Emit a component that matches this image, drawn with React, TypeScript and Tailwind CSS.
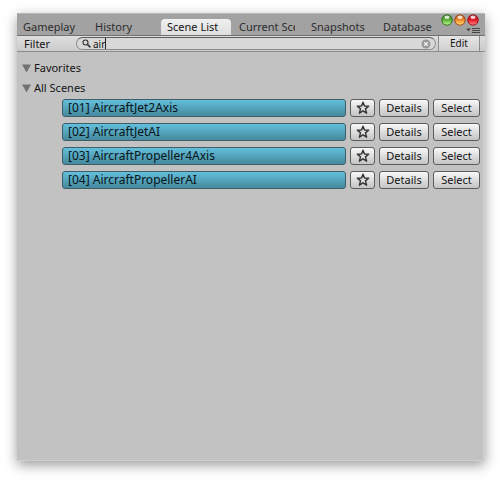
import { useState } from "react";

const tabs = ["Gameplay", "History", "Scene List", "Current Scene", "Snapshots", "Database"];

const scenes = [
  "[01] AircraftJet2Axis",
  "[02] AircraftJetAI",
  "[03] AircraftPropeller4Axis",
  "[04] AircraftPropellerAI",
];

const buttonStyle =
  "h-[18px] shrink-0 rounded-[3px] border border-[#5c5c5c] bg-linear-to-b from-[#f8f8f8] to-[#c4c4c4] text-center leading-4 text-[#141414]";

function Star() {
  return (
    <svg width="14" height="14" viewBox="0 0 14 14" fill="none" stroke="#333" strokeWidth="1.4" strokeLinejoin="round" aria-hidden="true">
      <path d="M7 1.2 8.5 5.1l4.2.2-3.2 2.6 1.1 4.3L7 9.9l-3.6 2.3 1.1-4.3L1.3 5.3l4.2-.2z" />
    </svg>
  );
}

function Light({ id, edge, mid, low }: { id: string; edge: string; mid: string; low: string }) {
  return (
    <svg width="12" height="12" viewBox="0 0 12 12" aria-hidden="true">
      <defs>
        <linearGradient id={id} x1="0" y1="0" x2="0" y2="1">
          <stop offset="0" stopColor={edge} />
          <stop offset="0.5" stopColor={mid} />
          <stop offset="1" stopColor={low} />
        </linearGradient>
      </defs>
      <circle cx="6" cy="6" r="5.2" fill={`url(#${id})`} stroke={edge} />
      <ellipse cx="6" cy="3.2" rx="2.6" ry="1.7" fill="#fff" fillOpacity="0.8" />
    </svg>
  );
}

function Foldout({ label, open, onToggle }: { label: string; open: boolean; onToggle: () => void }) {
  return (
    <button type="button" aria-expanded={open} onClick={onToggle} className="flex h-5 items-center gap-[3px] pl-[5px] text-left">
      <svg width="9" height="9" viewBox="0 0 9 9" aria-hidden="true" className={open ? "" : "-rotate-90"}>
        <path d="M0 .5h9L4.5 8.5z" fill="#727272" />
      </svg>
      {label}
    </button>
  );
}

export default function App() {
  const [active, setActive] = useState("Scene List");
  const [filter, setFilter] = useState("air");
  const [favorites, setFavorites] = useState(true);
  const [all, setAll] = useState(true);

  return (
    <div className="flex min-h-screen flex-col bg-white pt-[13px] pr-4 pb-[21px] pl-[17px] font-['Noto_Sans','Lucida_Grande',sans-serif] text-[11px] leading-4 text-[#141414]">
      <main className="flex flex-1 flex-col bg-[#c2c2c2] shadow-[0_4px_12px_rgba(0,0,0,0.4)]">
        <header className="flex h-[22px] justify-between border-t border-[#b8b8b8] bg-[#a2a2a2]">
          <div role="tablist" className="flex min-w-0 items-end gap-0.5">
            {tabs.map((tab) => (
              <button
                key={tab}
                type="button"
                role="tab"
                aria-selected={tab === active}
                onClick={() => setActive(tab)}
                className={
                  tab === active
                    ? "h-4 w-[70px] shrink-0 overflow-hidden rounded-t-[4px] bg-linear-to-b from-[#f0f0f0] to-[#dedede] pr-2 pl-1.5 text-left last:shrink"
                    : "h-4 w-[70px] shrink-0 pr-2 pl-1.5 text-left text-[#2c2c2c] last:shrink"
                }
              >
                <span className="block overflow-hidden whitespace-nowrap">{tab}</span>
              </button>
            ))}
          </div>
          <div className="flex shrink-0 flex-col items-end pr-[5px]">
            <div className="mr-px flex gap-px">
              <button type="button" aria-label="Minimize"><Light id="green" edge="#34701f" mid="#5cb53a" low="#c6ff9a" /></button>
              <button type="button" aria-label="Zoom"><Light id="amber" edge="#a04a18" mid="#ee8a28" low="#ffe07a" /></button>
              <button type="button" aria-label="Close"><Light id="red" edge="#98131b" mid="#e8192b" low="#ff8a8a" /></button>
            </div>
            <button type="button" aria-label="Tab options" className="pt-px">
              <svg width="14" height="7" viewBox="0 0 14 7" aria-hidden="true">
                <path d="M0 1.5h5L2.5 4.2z" fill="#444" />
                <path d="M6 1.5h8M6 3.5h8M6 5.5h8" stroke="#444" strokeWidth="1" />
              </svg>
            </button>
          </div>
        </header>

        <div className="flex h-[17px] items-center border-t border-b border-t-[#707070] border-b-[#8c8c8c] bg-linear-to-b from-[#dedede] to-[#cbcbcb]">
          <label htmlFor="filter" className="w-[59px] shrink-0 pl-[7px]">Filter</label>
          <label className="flex h-[13px] min-w-0 flex-1 items-center rounded-full border border-[#8a8a8a] border-t-[#5c5c5c] bg-[#d8d8d8] pr-1 pl-[5px]">
            <svg width="9" height="9" viewBox="0 0 9 9" fill="none" stroke="#333" aria-hidden="true" className="mr-0.5 shrink-0">
              <circle cx="3.5" cy="3.5" r="2.5" strokeWidth="1.1" />
              <path d="m5.4 5.4 3 3" strokeWidth="1.5" />
            </svg>
            <input
              id="filter"
              type="text"
              value={filter}
              onChange={(e) => setFilter(e.target.value)}
              className="h-3 min-w-0 bg-transparent p-0 text-[10px] leading-3 caret-transparent outline-none [field-sizing:content]"
            />
            <span className="h-[11px] w-px shrink-0 bg-[#222]" />
            <button type="button" aria-label="Clear filter" onClick={() => setFilter("")} className="ml-auto">
              <svg width="10" height="10" viewBox="0 0 10 10" aria-hidden="true">
                <circle cx="5" cy="5" r="4.5" fill="#999" />
                <path d="m3.2 3.2 3.6 3.6m0-3.6L3.2 6.8" stroke="#eee" strokeWidth="1.3" />
              </svg>
            </button>
          </label>
          <button type="button" className="mr-[5px] ml-0.5 h-full w-[42px] shrink-0 border-r border-l border-[#8c8c8c] bg-linear-to-b from-[#e4e4e4] to-[#d0d0d0] text-[10px] leading-[15px]">
            Edit
          </button>
        </div>

        <section className="flex flex-1 flex-col border-r-2 border-b border-[#cfcfcf] pt-1.5">
          <Foldout label="Favorites" open={favorites} onToggle={() => setFavorites(!favorites)} />
          <Foldout label="All Scenes" open={all} onToggle={() => setAll(!all)} />
          {all && (
            <ul className="flex flex-col gap-1.5 pt-px pr-[3px] pl-[45px]">
              {scenes.map((scene) => (
                <li key={scene} className="flex gap-1">
                  <button
                    type="button"
                    className="h-[18px] min-w-0 flex-1 rounded-[3px] border border-[#405e68] bg-linear-to-b from-[#63bfdc] to-[#46899e] px-[5px] text-left text-xs leading-4 text-[#081418]"
                  >
                    {scene}
                  </button>
                  <button type="button" aria-label={`Favorite ${scene}`} className={`${buttonStyle} flex w-[25px] items-center justify-center`}>
                    <Star />
                  </button>
                  <button type="button" className={`${buttonStyle} w-[50px]`}>Details</button>
                  <button type="button" className={`${buttonStyle} w-[47px]`}>Select</button>
                </li>
              ))}
            </ul>
          )}
        </section>
      </main>
    </div>
  );
}
